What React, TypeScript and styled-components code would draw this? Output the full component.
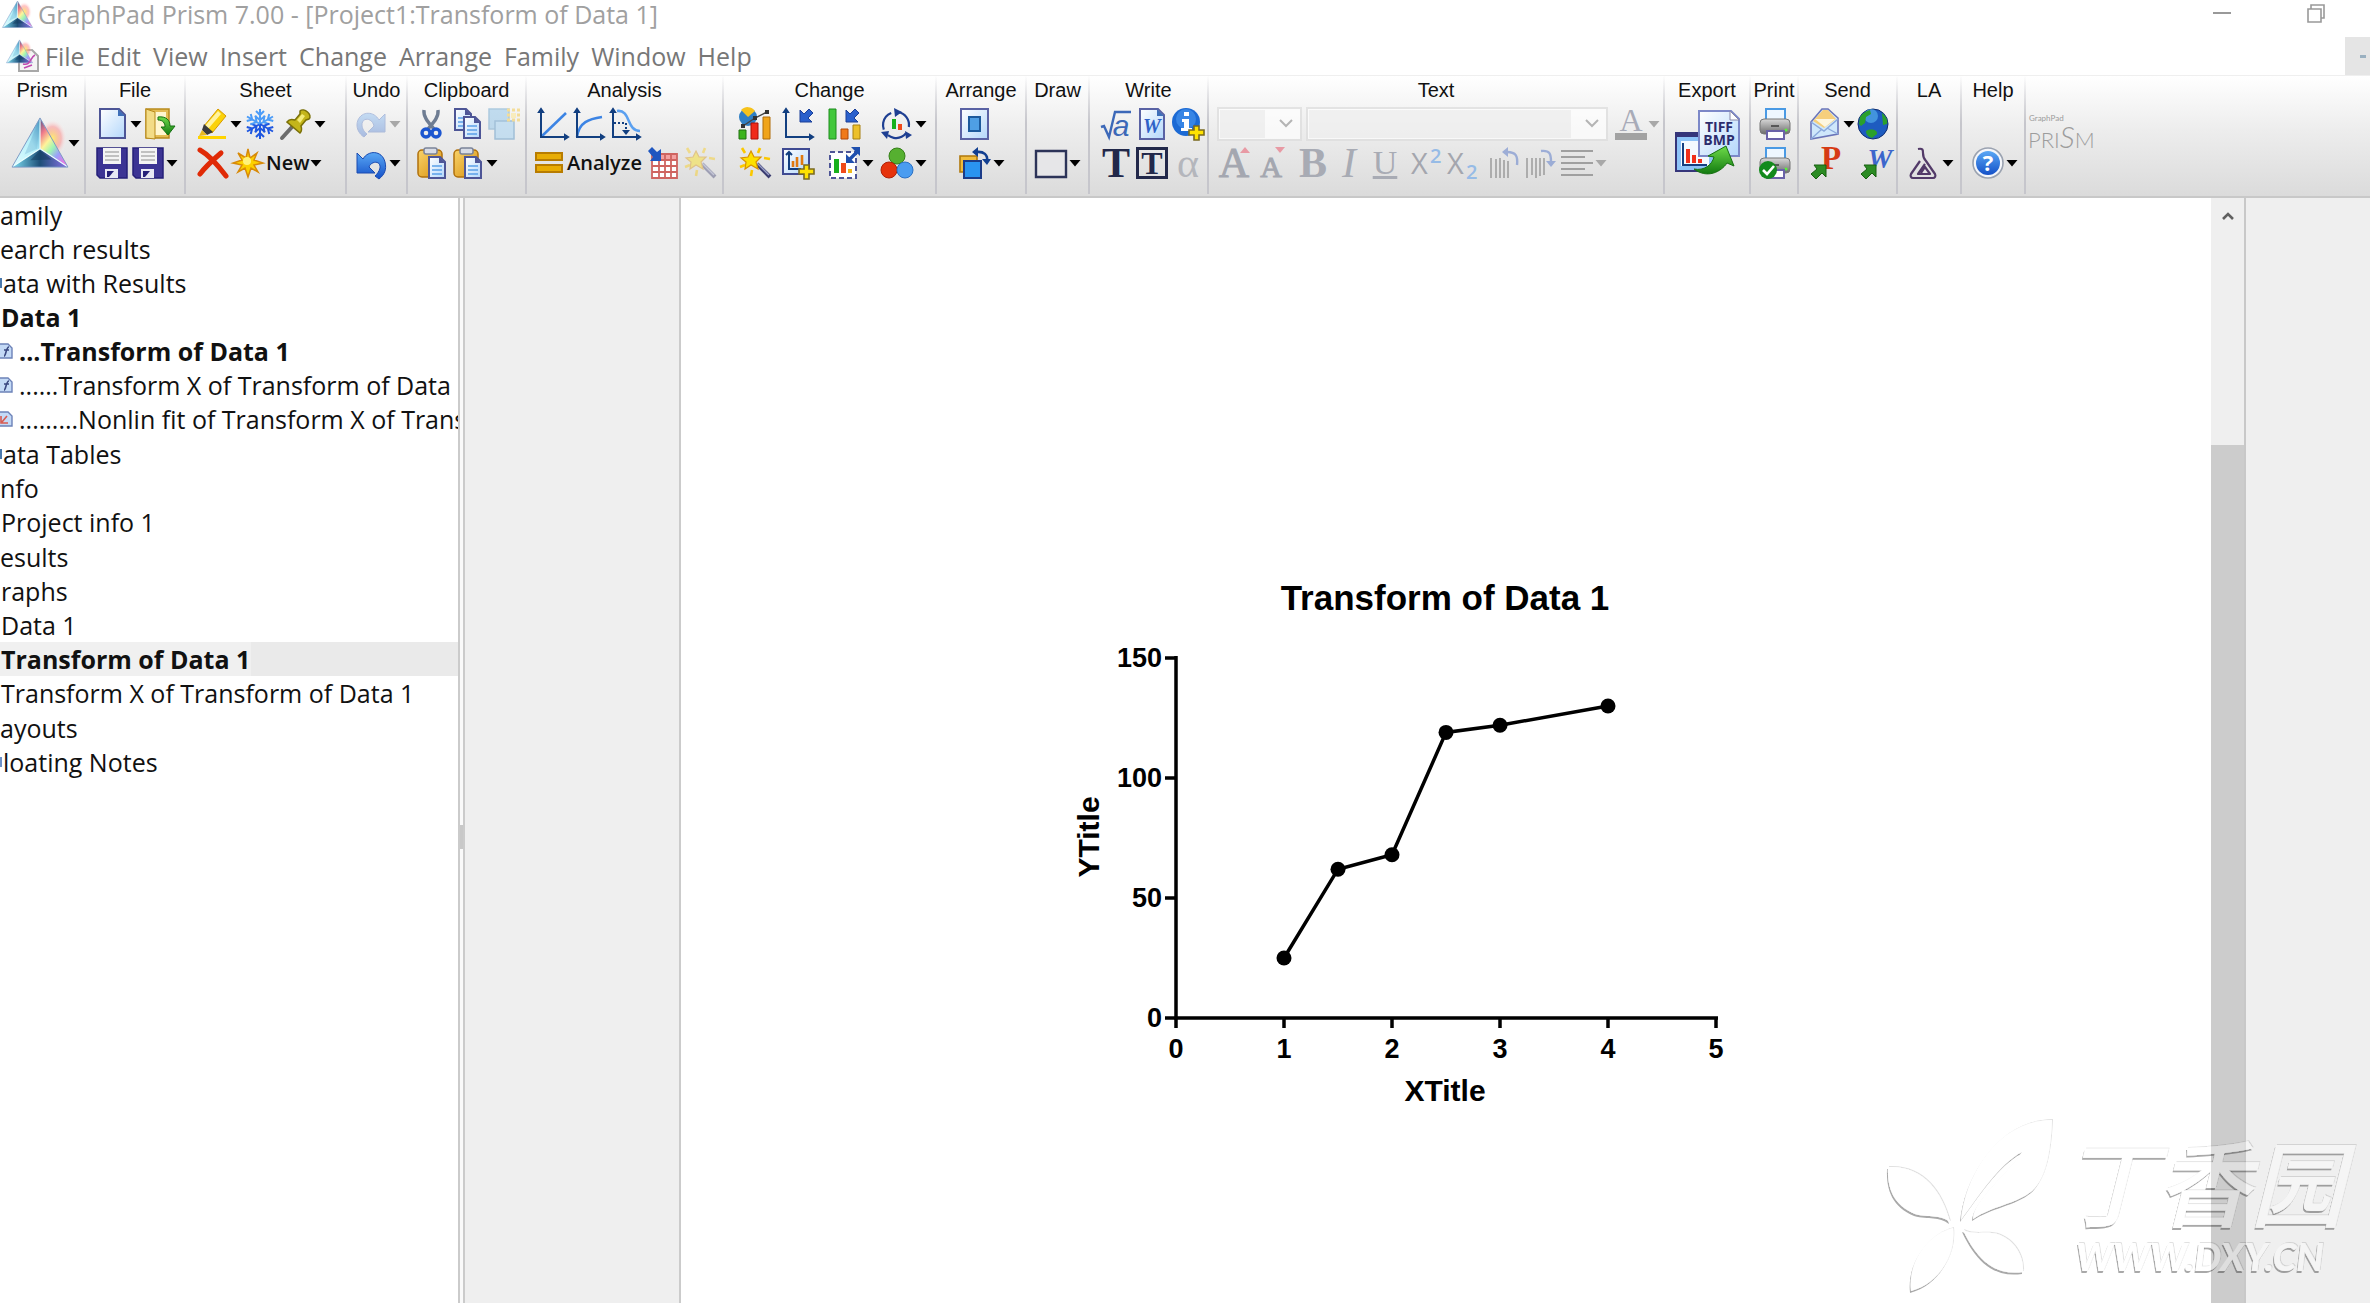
import React from "react";
import styled, { createGlobalStyle } from "styled-components";

const ui = `"Open Sans", "Noto Sans", sans-serif`;
const arial = `"Liberation Sans", Arial, sans-serif`;
const serif = `"Liberation Serif", "Times New Roman", serif`;

const Global = createGlobalStyle`
  * { box-sizing: border-box; }
  html, body, #root { height: 100%; }
  body { margin: 0; background: #fff; font-family: ${ui}; overflow: hidden; }
  button { font: inherit; color: inherit; }
`;

/* ---------- shell ---------- */

const Shell = styled.div`
  display: flex;
  flex-direction: column;
  height: 100%;
`;

const TitleBar = styled.header`
  display: flex;
  align-items: center;
  height: 37px;
  padding-bottom: 9px;
  color: #a0a0a0;
`;

const TitleText = styled.h1`
  flex: 1;
  margin: 0 0 0 3px;
  font-size: 25px;
  line-height: 28px;
  font-weight: 400;
  white-space: nowrap;
`;

const WindowButton = styled.button`
  display: flex;
  align-items: center;
  justify-content: center;
  width: 94px;
  height: 24px;
  padding: 0;
  border: 0;
  background: none;
`;

const WindowButtons = styled.div`
  display: flex;
  padding-right: 7px;
`;

const MenuBar = styled.nav`
  display: flex;
  align-items: center;
  height: 38px;
  padding-left: 6px;
`;

const MenuList = styled.div`
  display: flex;
  flex: 1;
  gap: 12px;
  padding-left: 5px;
`;

const MenuButton = styled.button`
  padding: 0;
  border: 0;
  background: none;
  color: #777;
  font-size: 25px;
  line-height: 36px;
`;

const ChildMinimize = styled.button`
  display: flex;
  align-items: center;
  justify-content: flex-end;
  width: 25px;
  height: 38px;
  padding: 0 4px;
  border: 0;
  background: #e5e5e5;
`;

/* ---------- ribbon ---------- */

const Ribbon = styled.div`
  display: flex;
  height: 123px;
  border-top: 1px solid #efefef;
  border-bottom: 2px solid #c8c8c8;
  background: linear-gradient(#fff, #ededed 45%, #dbdbdb);
`;

const GroupBox = styled.section<{ $w: number }>`
  display: flex;
  flex-direction: column;
  flex: none;
  width: ${(p) => p.$w}px;
  height: 118px;
  border-right: 2px solid;
  border-image: linear-gradient(rgba(200, 200, 208, 0), #c6c6cc 40%) 1;
`;

const GroupTitle = styled.h2`
  margin: 0;
  color: #111;
  font: 400 20px/28px ${arial};
  text-align: center;
  white-space: nowrap;
`;

const Row = styled.div<{ $pad?: number; $gap?: number; $tall?: boolean }>`
  display: flex;
  align-items: center;
  height: ${(p) => (p.$tall ? 78 : 39)}px;
  padding-left: ${(p) => p.$pad ?? 8}px;
  gap: ${(p) => p.$gap ?? 0}px;
`;

const Columns = styled.div<{ $pad: number; $cols: string }>`
  display: grid;
  grid-template-columns: ${(p) => p.$cols};
  grid-auto-rows: 39px;
  align-items: center;
  padding-left: ${(p) => p.$pad}px;
`;

const Cell = styled.div`
  display: flex;
  align-items: center;
`;

const Tool = styled.button<{ $w?: number }>`
  display: flex;
  align-items: center;
  justify-content: center;
  flex: none;
  width: ${(p) => p.$w ?? 36}px;
  height: 36px;
  padding: 0;
  border: 0;
  background: none;
`;

const BigTool = styled(Tool)`
  height: 76px;
`;

const WordTool = styled.button`
  padding: 0;
  border: 0;
  background: none;
  color: #111;
  font: 600 20px/36px ${ui};
`;

const Glyph = styled.span<{ $size: number; $bold?: boolean; $italic?: boolean; $underline?: boolean; $boxed?: boolean; $color: string }>`
  display: flex;
  align-items: center;
  justify-content: center;
  ${(p) => (p.$boxed ? "width: 32px; height: 32px; border: 3px solid #22284a;" : "")}
  color: ${(p) => p.$color};
  font-family: ${serif};
  font-size: ${(p) => p.$size}px;
  line-height: 32px;
  font-weight: ${(p) => (p.$bold ? 700 : 400)};
  font-style: ${(p) => (p.$italic ? "italic" : "normal")};
  text-decoration: ${(p) => (p.$underline ? "underline" : "none")};
`;

const SelectWrap = styled.label<{ $w: number }>`
  position: relative;
  display: block;
  width: ${(p) => p.$w}px;
  height: 34px;
  svg { position: absolute; right: 9px; top: 12px; }
`;

const SelectBox = styled.select`
  appearance: none;
  width: 100%;
  height: 100%;
  border: 2px solid #dcdcdc;
  background: linear-gradient(#f0f0f0, #f0f0f0) 1px 1px / calc(100% - 36px) calc(100% - 2px) no-repeat, #fff;
`;

const Brand = styled.div`
  padding: 38px 0 0 2px;
`;

/* ---------- body ---------- */

const Body = styled.main`
  display: flex;
  flex: 1;
  min-height: 0;
`;

const Sidebar = styled.aside`
  flex: none;
  width: 458px;
  overflow: hidden;
`;

const Tree = styled.div`
  display: flex;
  flex-direction: column;
  gap: 1px;
`;

const Branch = styled.ul`
  margin: 0;
  padding: 0;
  list-style: none;
`;

const Item = styled.li<{ $pad: number; $bold?: boolean; $selected?: boolean; $edge?: string }>`
  display: flex;
  align-items: center;
  gap: 6px;
  height: 34px;
  padding-left: ${(p) => p.$pad}px;
  background: ${(p) =>
    p.$selected
      ? "linear-gradient(90deg, #f0f0f0 251px, #eaeaea 251px)"
      : p.$edge
        ? `linear-gradient(${p.$edge}, ${p.$edge}) 0 50% / 2px 10px no-repeat`
        : "none"};
  color: #111;
  font-size: 25px;
  line-height: 32px;
  font-weight: ${(p) => (p.$bold ? 700 : 400)};
  white-space: nowrap;
  svg { flex: none; }
`;

const Splitter = styled.div`
  display: flex;
  align-items: center;
  flex: none;
  width: 7px;
  padding-top: 173px;
  border: solid #cbcbcb;
  border-width: 0 2px;
  background: #fafafa;
`;

const Grip = styled.div`
  width: 3px;
  height: 24px;
  background: #c8c8c8;
`;

const Gutter = styled.div<{ $w: number; $line?: boolean }>`
  flex: none;
  width: ${(p) => p.$w}px;
  border-right: ${(p) => (p.$line ? "2px solid #cbcbcb" : "0")};
  background: #efefef;
`;

const Page = styled.div`
  display: flex;
  flex: 1;
  flex-direction: column;
  align-items: center;
  padding-top: 372px;
  background: #fff;
`;

const ScrollTrack = styled.div`
  display: flex;
  flex-direction: column;
  flex: none;
  width: 35px;
  border-right: 2px solid #c8c8c8;
  background: #efefef;
`;

const ScrollUp = styled.button`
  height: 36px;
  padding: 0 0 4px;
  border: 0;
  background: none;
`;

const Thumb = styled.div`
  flex: 1;
  margin-top: 211px;
  background: #ccc;
`;

const Watermark = styled.div`
  position: absolute;
  right: 0;
  bottom: 0;
  pointer-events: none;
  svg { display: block; }
`;

/* ---------- icons ---------- */

const Drawing = styled.svg`
  flex: none;
  overflow: visible;
`;

const HiddenDefs = styled.svg`
  position: absolute;
`;

const Svg = ({ children, w = 32, h = 32, vb = "0 0 32 32", o = 1 }: any) => (
  <Drawing width={w} height={h} viewBox={vb} opacity={o} fill="none" aria-hidden="true">{children}</Drawing>
);

const Caret = ({ dim = false }) => (
  <Tool $w={12} aria-label="More">
    <svg width="12" height="8" viewBox="0 0 12 8"><path d="M0.5 1h11L6 7.5z" fill={dim ? "#a8a8a8" : "#000"} /></svg>
  </Tool>
);

const Defs = () => (
  <HiddenDefs width="0" height="0" aria-hidden="true">
    <defs>
      <linearGradient id="doc" x1="0" y1="0" x2="1" y2="1"><stop offset="0" stopColor="#fff" /><stop offset="1" stopColor="#b3d7fb" /></linearGradient>
      <linearGradient id="gold" x1="0" y1="0" x2="1" y2="1"><stop offset="0" stopColor="#f9d36a" /><stop offset="1" stopColor="#d7900f" /></linearGradient>
      <linearGradient id="blue" x1="0" y1="0" x2="0" y2="1"><stop offset="0" stopColor="#5aa8f5" /><stop offset="1" stopColor="#1450c8" /></linearGradient>
      <linearGradient id="green" x1="0" y1="0" x2="0" y2="1"><stop offset="0" stopColor="#6fdc4a" /><stop offset="1" stopColor="#127a10" /></linearGradient>
      <linearGradient id="left" x1="0" y1="1" x2="1" y2="0"><stop offset="0" stopColor="#e4fdff" /><stop offset=".6" stopColor="#b4f0fa" /><stop offset="1" stopColor="#3c92c0" /></linearGradient>
      <linearGradient id="base" x1="0" y1="0" x2="1" y2="0"><stop offset="0" stopColor="#7fe0f4" /><stop offset=".5" stopColor="#1d4f78" /><stop offset="1" stopColor="#8b72e8" /></linearGradient>
      <linearGradient id="rain" x1="0" y1="0" x2=".7" y2="1"><stop offset="0" stopColor="#4b4f88" /><stop offset=".25" stopColor="#f07a8a" /><stop offset=".45" stopColor="#fff49a" /><stop offset=".62" stopColor="#9df6b4" /><stop offset=".8" stopColor="#9aa0fa" /><stop offset="1" stopColor="#e47ae4" /></linearGradient>
      <radialGradient id="glow"><stop offset="0" stopColor="#ffef60" stopOpacity=".9" /><stop offset=".6" stopColor="#ff8a8a" stopOpacity=".5" /><stop offset="1" stopColor="#fff" stopOpacity="0" /></radialGradient>
      <linearGradient id="printer" x1="0" y1="0" x2="0" y2="1"><stop offset="0" stopColor="#d8d8d8" /><stop offset="1" stopColor="#6c6c6c" /></linearGradient>
      <filter id="bevel" x="-5%" y="-10%" width="110%" height="120%">
        <feOffset in="SourceAlpha" dx="-1.5" dy="1.5" result="a" />
        <feGaussianBlur in="a" stdDeviation=".5" result="ab" />
        <feComposite in="ab" in2="SourceAlpha" operator="out" result="dark" />
        <feOffset in="SourceAlpha" dx="1" dy="-1" result="b" />
        <feComposite in="b" in2="SourceAlpha" operator="out" result="soft" />
        <feComponentTransfer in="dark" result="d2"><feFuncA type="linear" slope=".34" /></feComponentTransfer>
        <feComponentTransfer in="soft" result="s2"><feFuncA type="linear" slope=".12" /></feComponentTransfer>
        <feComponentTransfer in="SourceGraphic" result="body"><feFuncA type="linear" slope=".35" /></feComponentTransfer>
        <feMerge><feMergeNode in="s2" /><feMergeNode in="d2" /><feMergeNode in="body" /></feMerge>
      </filter>
    </defs>
  </HiddenDefs>
);

const PrismArt = () => (
  <>
    <ellipse cx="43" cy="23" rx="15" ry="20" fill="url(#glow)" />
    <path d="M30 2 1 53 30 34z" fill="url(#left)" />
    <path d="M30 2 59 53 30 34z" fill="url(#rain)" />
    <path d="M1 53 30 34 59 53z" fill="url(#base)" />
    <path d="M30 2v32M1 53l29-19 29 19" stroke="#eaffff" strokeWidth="1.2" />
    <path d="M30 2 27 34 14 40z" fill="#5f9fc8" opacity=".3" />
    <path d="M30 36 20 46 42 45z" fill="#123a5c" opacity=".5" />
    <path d="M30 2 1 53h58z" stroke="#7b98c4" strokeWidth="1" />
  </>
);
const PrismIcon = ({ w = 60, h = 56 }) => <Svg w={w} h={h} vb="0 0 60 56"><PrismArt /></Svg>;

const PrismDocIcon = () => (
  <Svg w={34} h={34} vb="0 0 34 34">
    <path d="M13 11h13l6 6v15H13z" fill="#f4f4f4" stroke="#a8a8a8" strokeWidth="2" />
    <g transform="scale(.45)"><PrismArt /></g>
    <path d="M17 25c8 2 7-7 12-9M18 29l8-3" stroke="#c04ab0" strokeWidth="1.6" />
  </Svg>
);

const NewDocIcon = () => <Svg><path d="M4 1h19l6 6v23H4z" fill="url(#doc)" stroke="#4d5596" strokeWidth="2" /><path d="M22 1v7h7z" fill="#3f6fb8" /></Svg>;
const OpenIcon = () => (
  <Svg>
    <path d="M2 1h23v29H2z" fill="#e4bc54" stroke="#b88a1c" strokeWidth="1.5" /><path d="M8 4h14v23H8z" fill="#fff6cf" />
    <path d="M2 1l9 3v27l-9-1z" fill="#f3dc86" stroke="#b88a1c" />
    <path d="M14 9c8-1 12 3 12 9h5l-7 9-7-8h4c0-4-2-7-7-7z" fill="url(#green)" stroke="#157012" />
  </Svg>
);
const SaveIcon = () => (
  <Svg>
    <path d="M1 1h30v30H4l-3-3z" fill="#3c3494" stroke="#251f78" strokeWidth="1.5" />
    <path d="M7 1h18v16H7z" fill="#f4f4f4" /><path d="M9 5h14M9 9h14M9 13h14" stroke="#b0b0b0" strokeWidth="1.6" />
    <path d="M9 22h13v9H9z" fill="#e8e8f4" /><path d="M11 24h7l-5 6h-2z" fill="#251f78" />
  </Svg>
);
const HighlighterIcon = () => (
  <Svg>
    <path d="M2 28h28v3H2z" fill="#ffd400" />
    <path d="M22 1l8 7-14 17-8-7z" fill="#fbd20a" stroke="#d79a00" /><path d="M22 3l3 3-13 15-3-3z" fill="#fff3a0" />
    <path d="M8 16l9 8-6 3-5-5z" fill="#3a3a3a" /><path d="M6 22l5 5-8 1z" fill="#e8b820" />
  </Svg>
);
const SnowIcon = () => (
  <Svg>
    {[0, 60, 120, 180, 240, 300].map((a) => (
      <path key={a} transform={`rotate(${a} 16 16)`} d="M16 16V1M12 3l4 4 4-4M11 8l5 4 5-4" stroke={a > 90 && a < 270 ? "#1f57e0" : "#4b9cf8"} strokeWidth="2" />
    ))}
  </Svg>
);
const PinIcon = () => (
  <Svg>
    <path d="M12 19L2 30" stroke="#6c6c6c" strokeWidth="4" strokeLinecap="round" />
    <path d="M20 3c4-4 13 4 9 8l-3 1-5 6c1 3 1 5-1 7L7 14c2-3 5-3 8-2l5-6z" fill="#c4b51a" stroke="#7a7008" strokeWidth="1.5" />
    <path d="M17 12l5-6 3 2-5 7z" fill="#f4ec7a" />
  </Svg>
);
const DeleteIcon = () => <Svg><path d="M4 3c9 5 17 14 26 26M25 6C18 12 10 19 4 27" stroke="#e02a06" strokeWidth="5" strokeLinecap="round" /></Svg>;
const StarIcon = () => (
  <Svg><path d="M16 2l2 9 7-5-3 7 9 3-9 2 4 7-7-4-3 9-3-9-7 4 4-7-9-2 9-3-4-7 8 5z" fill="#fcd000" stroke="#d88a08" strokeWidth="1.5" /><circle cx="15" cy="14" r="4" fill="#fff27a" /></Svg>
);
const UndoIcon = () => <Svg><path d="M2 6v20h18l-6-6c2-6 12-7 11 1-1 4-3 6-5 8l4 3c5-4 8-9 6-17C27 3 13 3 8 12z" fill="url(#blue)" stroke="#1a4ab0" /></Svg>;
const RedoIcon = () => <Svg o={0.3}><path d="M30 6v18H13l6-6C17 9 6 9 7 18c1 5 3 6 5 8l-3 3C4 26 0 19 3 12 7 3 19 3 24 12z" fill="url(#blue)" stroke="#1a4ab0" /></Svg>;
const CutIcon = () => (
  <Svg>
    <path d="M8 2c-1 7 5 13 10 19M22 2c1 7-5 13-10 19" stroke="#6e7c92" strokeWidth="3.4" />
    <circle cx="10" cy="25" r="4" stroke="#1c56d0" strokeWidth="3.4" /><circle cx="20" cy="25" r="4" stroke="#1c56d0" strokeWidth="3.4" />
  </Svg>
);
const Sheet = ({ x = 0, y = 0 }) => (
  <g transform={`translate(${x} ${y})`}>
    <path d="M1 1h11l5 5v16H1z" fill="url(#doc)" stroke="#4d5596" strokeWidth="2" />
    <path d="M4 10h10M4 14h10M4 18h10" stroke="#5aa0e8" strokeWidth="1.6" /><path d="M11 1v6h6z" fill="#4d5596" />
  </g>
);
const CopyIcon = () => <Svg><Sheet x={2} y={0} /><Sheet x={11} y={8} /></Svg>;
const DuplicateIcon = () => (
  <Svg o={0.5}>
    <path d="M1 1h20v20H1z" fill="#8ec4ea" stroke="#6aa2cc" strokeWidth="1.5" /><path d="M7 13h19v18H7z" fill="#9fd0f2" stroke="#5a94c4" strokeWidth="1.5" />
    <path d="M19 2h13M19 7h13M19 12h13" stroke="#f4c840" strokeWidth="3" strokeDasharray="3 2" /><path d="M23 5h5v5h-5z" fill="#ffe88a" />
  </Svg>
);
const PasteIcon = () => (
  <Svg>
    <rect x="2" y="3" width="24" height="27" rx="4" fill="url(#gold)" stroke="#b0700c" strokeWidth="1.5" />
    <rect x="8" y="1" width="13" height="6" rx="2" fill="#d8dce6" stroke="#7a8298" strokeWidth="1.5" />
    <Sheet x={12} y={9} />
  </Svg>
);
const Axes = () => <path d="M4 4v25h26M2 4l2-3 2 3zM28 27l3 2-3 2z" stroke="#123f80" strokeWidth="2" fill="none" />;
const LinearIcon = () => <Svg><path d="M4 29L29 5" stroke="#3c84e4" strokeWidth="2.5" /><Axes /></Svg>;
const CurveIcon = () => <Svg><path d="M4 29C6 14 16 11 29 9" stroke="#3c84e4" strokeWidth="2.5" /><Axes /></Svg>;
const DoseIcon = () => (
  <Svg><path d="M8 3c14-2 9 20 23 20" stroke="#5aa0f0" strokeWidth="2.5" /><path d="M5 15h12v9" stroke="#123f80" strokeWidth="2" strokeDasharray="2 2" /><path d="M13 22h8l-4 5z" fill="#123f80" /><Axes /></Svg>
);
const EqualsIcon = () => <Svg w={28} h={32} vb="0 0 28 32"><path d="M1 6h26v7H1zM1 18h26v7H1z" fill="#e8ac04" stroke="#b87c00" strokeWidth="2" /></Svg>;
const TableIcon = () => (
  <Svg>
    <path d="M5 7h25v24H5z" fill="#fff" /><path d="M14 7h16v5H14z" fill="#f4a0a0" />
    <path d="M5 7h25v24H5zM5 13h25M5 19h25M5 25h25M12 7v24M18 7v24M24 7v24" stroke="#cf6460" strokeWidth="1.8" />
    <path d="M1 4l4-4 5 5 4-3v12H3l3-4z" fill="#1f56c0" />
  </Svg>
);
const WandIcon = ({ o = 1 }) => (
  <Svg o={o}>
    <path d="M18 17l13 13" stroke="#3a3c70" strokeWidth="4" /><path d="M18 16l12 12" stroke="#9aa0c8" strokeWidth="1.4" />
    <path d="M3 1l3 5M21 1l-2 5M1 20l5-2M12 29l1-6M25 11l6 1" stroke="#fbc800" strokeWidth="2.6" />
    <path d="M12 4l3 6 7 0-5 5 2 7-7-4-6 4 1-7-5-4 7-1z" fill="#fde000" stroke="#d89000" strokeWidth="1.2" />
  </Svg>
);
const ChartMixIcon = () => (
  <Svg w={34}>
    <circle cx="9" cy="9" r="9" fill="#2f7fc4" /><path d="M9 9L2 2a9 9 0 0 1 14 1z" fill="#f6c21a" />
    <path d="M0 22h7v9H0z" fill="#3cb41c" stroke="#207010" /><path d="M12 15h7v16h-7z" fill="#f02a1a" stroke="#a81008" /><path d="M24 9h7v22h-7z" fill="#f0a41a" stroke="#b06c08" />
    <path d="M4 18l12-8 12-6" stroke="#444" strokeWidth="1.4" /><path d="M2 16h4v4H2zM14 8h4v4h-4zM26 2h4v4h-4z" fill="#333" />
  </Svg>
);
const DownLeft = () => <path d="M18 2v12h12l-4-4 5-5-4-4-5 5z" fill="#2a60cc" stroke="#1a3f98" />;
const AxisSwapIcon = () => <Svg><Axes /><DownLeft /></Svg>;
const BarSwapIcon = () => (
  <Svg w={34}>
    <path d="M1 1h7v30H1z" fill="#42c83c" stroke="#1c8c1c" /><path d="M13 21h7v10h-7z" fill="#f07a1a" stroke="#b04808" /><path d="M25 17h7v14h-7z" fill="#ecc02a" stroke="#a88010" />
    <DownLeft />
  </Svg>
);
const RotateChartIcon = () => (
  <Svg>
    <circle cx="15" cy="17" r="13" stroke="#1e3f92" strokeWidth="2.2" strokeDasharray="20 7" transform="rotate(-80 15 17)" />
    <path d="M13 0l8 4-7 5zM0 24l8-1-2 8zM25 31l-1-8 7 4z" fill="#1e3f92" /><path d="M11 11h4v10h-4z" fill="#18b01c" /><path d="M17 16h4v6h-4z" fill="#f04a1a" />
  </Svg>
);
const Plus = () => <path d="M22 18h5v4h5v5h-5v5h-5v-5h-5v-5h5z" fill="#ffe200" stroke="#7a6a20" strokeWidth="1.6" />;
const AddGraphIcon = () => (
  <Svg><path d="M1 2h26v25H1z" fill="url(#doc)" stroke="#3f4a92" strokeWidth="2" /><path d="M7 5v17h12M4 8l3-3 3 3" stroke="#123f80" strokeWidth="2" /><path d="M11 14v6M15 10v10M20 8v10" stroke="#e07a10" strokeWidth="2.6" /><Plus /></Svg>
);
const ResizeIcon = () => (
  <Svg w={34}>
    <path d="M2 5h26v26H2z" fill="#fff" stroke="#4d5596" strokeWidth="2" strokeDasharray="5 3" />
    <path d="M6 12h5v14H6z" fill="#18b01c" /><path d="M13 16h5v10h-5z" fill="#f04a1a" /><path d="M20 22h4v4h-4z" fill="#f0b81a" />
    <path d="M21 13L29 5" stroke="#1f4fae" strokeWidth="3.4" /><path d="M23 0h9v9zM18 7v9h9z" fill="#1f4fae" />
  </Svg>
);
const BallsIcon = () => <Svg><circle cx="16" cy="9" r="8" fill="#56b030" stroke="#358018" /><circle cx="8" cy="23" r="8" fill="#e6330c" stroke="#b02006" /><circle cx="24" cy="23" r="8" fill="#4a9cf0" stroke="#2a70c4" /></Svg>;
const CenterIcon = () => <Svg><path d="M2 1h27v30H2z" fill="url(#doc)" stroke="#5a62a4" strokeWidth="2" /><path d="M10 9h11v14H10z" fill="#4f9fe4" stroke="#1c5a9c" strokeWidth="2" /></Svg>;
const OrderIcon = () => (
  <Svg><path d="M1 9h17v16H1z" fill="#f0bc3c" stroke="#b0780c" strokeWidth="1.6" /><path d="M5 14h17v17H5z" fill="#2a94f0" stroke="#1c3c88" strokeWidth="2" /><path d="M17 5c8-1 12 3 11 9" stroke="#123f90" strokeWidth="2.6" /><path d="M19 0v10l-6-5zM23 12h9l-4 6z" fill="#123f90" /></Svg>
);
const RectIcon = () => <Svg w={34}><path d="M1 4h30v26H1z" fill="#e6e6e8" stroke="#2c3358" strokeWidth="2.4" /></Svg>;
const WordDocIcon = () => (
  <Svg><path d="M4 1h18l6 6v24H4z" fill="url(#doc)" stroke="#5a62a4" strokeWidth="2" /><path d="M21 1v7h7z" fill="#3f6fb8" /><text x="16" y="25" textAnchor="middle" fontFamily={serif} fontSize="20" fontWeight="700" fontStyle="italic" fill="#2f62c8">W</text></Svg>
);
const RootIcon = () => (
  <Svg><path d="M1 19l3-1 5 11L15 4h16" stroke="#3c68b8" strokeWidth="2.4" /><text x="21" y="28" textAnchor="middle" fontFamily={arial} fontSize="30" fontStyle="italic" fill="#3c68b8">a</text></Svg>
);
const InfoIcon = () => <Svg><circle cx="14" cy="14" r="14" fill="#1c6ad4" /><circle cx="14" cy="11" r="10" fill="#4a98f0" opacity=".6" /><path d="M12 4h5v4h-5zM10 11h7v9h3v3H9v-3h3v-6h-2z" fill="#fff" /><Plus /></Svg>;
const RotTextIcon = ({ cw = false }) => (
  <Svg o={0.6}>
    {cw
      ? <path d="M2 11v20M7 11v17M11 11v20M15 11v18M19 11v17" stroke="#8a8a8a" strokeWidth="2" />
      : <path d="M2 11v20M7 12v19M11 11v20M15 13v18M19 14v17" stroke="#8a8a8a" strokeWidth="2" />}
    {cw ? <path d="M16 4c9-1 10 3 10 11" stroke="#6c88cc" strokeWidth="2.4" /> : <path d="M28 18c1-9-1-13-10-13" stroke="#6c88cc" strokeWidth="2.4" />}
    {cw ? <path d="M21 14h10l-5 6z" fill="#6c88cc" /> : <path d="M19 0v10l-6-5z" fill="#6c88cc" />}
  </Svg>
);
const AlignIcon = () => <Svg><path d="M0 4h32M0 10h24M0 16h32M0 22h24M0 28h32" stroke="#a0a0a0" strokeWidth="2.2" /></Svg>;
const FontColorIcon = () => <Svg w={34}><text x="17" y="23" textAnchor="middle" fontFamily={serif} fontSize="32" fill="#a8abb8">A</text><path d="M1 25h32v7H1z" fill="#a2a2a2" /></Svg>;
const SizeIcon = ({ up = true }) => (
  <Svg w={34}>
    <text x={up ? 15 : 16} y="30" textAnchor="middle" fontFamily={serif} fontSize={up ? 42 : 30} fontWeight={400} fill="#a4a7b0" stroke="#a4a7b0" strokeWidth="1">A</text>
    <path d={up ? "M21 6h10l-5-6z" : "M20 0h10l-5 6z"} fill="#e89aa4" />
  </Svg>
);
const ScriptIcon = ({ sup = true }) => (
  <Svg w={34} vb="0 0 34 32">
    <text x="1" y="27" fontFamily={ui} fontSize="29" fill="#a4a6ae">X</text>
    <text x="20" y={sup ? 16 : 32} fontFamily={ui} fontSize="20" fontWeight="600" fill="#96bbe6">2</text>
  </Svg>
);
const ExportIcon = () => (
  <Svg w={66} h={68} vb="0 0 66 68">
    <path d="M1 24h40v38H1z" fill="#8ec4f8" stroke="#35357a" strokeWidth="2" /><path d="M1 24h40v4H1z" fill="#35357a" /><path d="M6 32h28v25H6z" fill="#f4faff" />
    <path d="M8 34v22h24" stroke="#153f80" strokeWidth="2" /><path d="M13 40v14M19 46v8M25 50v4" stroke="#f0301a" strokeWidth="4" />
    <path d="M24 2h32l8 8v37H24z" fill="url(#doc)" stroke="#7c88c8" strokeWidth="2" /><path d="M55 2v9h9z" fill="#fff" stroke="#8888a8" />
    <g fontFamily={ui} fontSize="14" fontWeight="700" fill="#2c2c6c" textAnchor="middle"><text x="44" y="23">TIFF</text><text x="44" y="36">BMP</text></g>
    <path d="M19 60c10 2 18-4 20-12l-6-1 18-10 8 20-7-3c-6 9-20 16-33 6z" fill="url(#green)" stroke="#177012" />
  </Svg>
);
const PrinterArt = () => (
  <>
    <path d="M7 1h19v12H7z" fill="#eef7ff" stroke="#4a9ae4" strokeWidth="2" /><rect x="1" y="11" width="30" height="15" rx="4" fill="url(#printer)" stroke="#777" />
    <path d="M12 18h8" stroke="#444" strokeWidth="1.6" /><circle cx="27" cy="22" r="1.6" fill="#5af03c" /><path d="M8 23h17v8H8z" fill="#fff" stroke="#6a62a8" strokeWidth="2" />
  </>
);
const PrintIcon = () => <Svg><PrinterArt /></Svg>;
const PrintOkIcon = () => <Svg><PrinterArt /><circle cx="9" cy="23" r="9" fill="#128a1c" /><path d="M4 23l4 4 7-8" stroke="#fff" strokeWidth="2.6" /></Svg>;
const MailIcon = () => (
  <Svg><path d="M2 14L13 1h6l10 9v16L2 31z" fill="#cfe7fb" stroke="#6a74b8" strokeWidth="1.6" /><path d="M4 13L14 2h5l8 9-12 9z" fill="#f6cf7c" /><path d="M6 11h20l-10 8z" fill="#fdf6e0" /><path d="M2 14l13 9 14-12M2 31l11-10M29 26l-11-6" stroke="#8aa8dc" strokeWidth="1.4" /></Svg>
);
const GlobeIcon = () => (
  <Svg><circle cx="16" cy="16" r="15" fill="#1e5cc0" stroke="#0e2c70" /><circle cx="14" cy="8" r="7" fill="#5ab8f0" opacity=".6" /><path d="M3 9c3-4 6-6 10-7l1 4-5 3-1 6-4 3-2-2zM9 23c5-3 12-1 11 3l-5 4c-3-1-6-3-6-7zM25 5c4 3 6 7 5 11l-4 1z" fill="#2aa02c" /></Svg>
);
const SendArrow = () => <path d="M5 18h12v12l-4-4-6 6-5-5 6-5z" fill="#2c8c24" stroke="#17600f" />;
const PowerPointIcon = () => <Svg w={34}><text x="22" y="22" textAnchor="middle" fontFamily={serif} fontSize="33" fontWeight="700" fill="#d63a14">P</text><SendArrow /></Svg>;
const WordIcon = () => <Svg w={34}><text x="21" y="21" textAnchor="middle" fontFamily={serif} fontSize="28" fontWeight="700" fontStyle="italic" fill="#3c66cc">W</text><SendArrow /></Svg>;
const FlaskIcon = () => <Svg><path d="M10 2c5-1 5 1 5 4s0 5 3 8l9 13c1 2 0 4-2 4H5c-2 0-3-2-2-4l9-13M17 17l-7 10h12l-5-7-4 6" stroke="#523a68" strokeWidth="2.2" strokeLinejoin="round" /></Svg>;
const HelpIcon = () => (
  <Svg><circle cx="16" cy="16" r="15" fill="#f4f6fa" stroke="#9aa2b0" strokeWidth="1.6" /><circle cx="16" cy="16" r="12" fill="url(#blue)" /><text x="16" y="24" textAnchor="middle" fontFamily={ui} fontSize="22" fontWeight="700" fill="#fff">?</text></Svg>
);
const SheetGlyph = ({ red = false }) => (
  <svg width="13" height="16" viewBox="0 0 13 16" fill="none"><path d="M-2 1h10l4 4v10H-2z" fill="#c4daf6" stroke="#6c82b8" strokeWidth="1.4" /><path d={red ? "M1 5v7h7M2 11l5-6" : "M4 13c2 0 2-9 5-9M4 7h5"} stroke={red ? "#d85a50" : "#3a4880"} strokeWidth="1.6" /></svg>
);

/* ---------- ribbon parts ---------- */

const Group = ({ title, w, children }: { title: string; w: number; children: React.ReactNode }) => (
  <GroupBox $w={w} aria-label={title}>
    <GroupTitle>{title}</GroupTitle>
    {children}
  </GroupBox>
);

const T = ({ label, w, children }: { label: string; w?: number; children: React.ReactNode }) => (
  <Tool $w={w} aria-label={label}>{children}</Tool>
);

const Choice = ({ label, w }: { label: string; w: number }) => (
  <SelectWrap $w={w}>
    <SelectBox disabled aria-label={label} />
    <svg width="14" height="9" viewBox="0 0 14 9" fill="none"><path d="M1 1l6 6 6-6" stroke="#b4b4b4" strokeWidth="2" /></svg>
  </SelectWrap>
);

/* ---------- chart ---------- */

const X0 = 110;
const Y0 = 448;
const PLOT_W = 540;
const PLOT_H = 360;
const points: [number, number][] = [[1, 25], [1.5, 62], [2, 68], [2.5, 119], [3, 122], [4, 130]];
const px = (v: number) => X0 + (v / 5) * PLOT_W;
const py = (v: number) => Y0 - (v / 150) * PLOT_H;

const Chart = () => (
  <svg width="760" height="560" viewBox="0 0 760 560" fontFamily={arial} fontWeight="700" role="img" aria-label="Transform of Data 1">
    <text x="379" y="40" fontSize="35" textAnchor="middle">Transform of Data 1</text>
    <path d={`M${X0} ${py(150) - 2}V${Y0}H${px(5) + 2}`} fill="none" stroke="#000" strokeWidth="3.5" />
    {[0, 50, 100, 150].map((v) => (
      <g key={v}>
        <path d={`M${X0 - 11} ${py(v)}h12`} stroke="#000" strokeWidth="3.5" />
        <text x={X0 - 14} y={py(v) + 9} fontSize="27" textAnchor="end">{v}</text>
      </g>
    ))}
    {[0, 1, 2, 3, 4, 5].map((v) => (
      <g key={v}>
        <path d={`M${px(v)} ${Y0}v10`} stroke="#000" strokeWidth="3.5" />
        <text x={px(v)} y={Y0 + 40} fontSize="27" textAnchor="middle">{v}</text>
      </g>
    ))}
    <polyline points={points.map(([x, y]) => `${px(x)},${py(y)}`).join(" ")} fill="none" stroke="#000" strokeWidth="3.5" />
    {points.map(([x, y]) => <circle key={x} cx={px(x)} cy={py(y)} r="7.5" />)}
    <text x="379" y="531" fontSize="30" textAnchor="middle">XTitle</text>
    <text transform="translate(33 267) rotate(-90)" fontSize="30" textAnchor="middle">YTitle</text>
  </svg>
);

type Node = { t: string; pad: number; bold?: boolean; selected?: boolean; icon?: string; edge?: string };

const tree: Node[][] = [
  [
    { t: "amily", pad: 0 },
    { t: "earch results", pad: 0 },
    { t: "ata with Results", pad: 3, edge: "#4a78ac" },
    { t: "Data 1", pad: 1, bold: true },
    { t: "...Transform of Data 1", pad: 0, bold: true, icon: "f" },
    { t: "......Transform X of Transform of Data 1", pad: 0, icon: "f" },
    { t: ".........Nonlin fit of Transform X of Transform", pad: 0, icon: "r" },
  ],
  [{ t: "ata Tables", pad: 3, edge: "#4a78ac" }, { t: "nfo", pad: 0 }, { t: "Project info 1", pad: 1 }],
  [
    { t: "esults", pad: 0 },
    { t: "raphs", pad: 1 },
    { t: "Data 1", pad: 1 },
    { t: "Transform of Data 1", pad: 1, bold: true, selected: true },
    { t: "Transform X of Transform of Data 1", pad: 1 },
  ],
  [{ t: "ayouts", pad: 0 }, { t: "loating Notes", pad: 3, edge: "#6c90c8" }],
];

const G = "#a8abb4";

export default function App() {
  return (
    <Shell>
      <Global />
      <Defs />
      <TitleBar>
        <PrismIcon w={35} h={29} />
        <TitleText>GraphPad Prism 7.00 - [Project1:Transform of Data 1]</TitleText>
        <WindowButtons>
          <WindowButton aria-label="Minimize"><svg width="18" height="18" viewBox="0 0 18 18"><path d="M0 8h18" stroke="#999" strokeWidth="2" /></svg></WindowButton>
          <WindowButton aria-label="Restore"><svg width="18" height="20" viewBox="0 0 18 20" fill="none" stroke="#999" strokeWidth="1.6"><path d="M1 5h13v13H1zM4 5V1h13v13h-3" /></svg></WindowButton>
        </WindowButtons>
      </TitleBar>
      <MenuBar>
        <PrismDocIcon />
        <MenuList>
          {["File", "Edit", "View", "Insert", "Change", "Arrange", "Family", "Window", "Help"].map((m) => <MenuButton key={m}>{m}</MenuButton>)}
        </MenuList>
        <ChildMinimize aria-label="Minimize sheet"><svg width="6" height="3"><path d="M0 1.5h6" stroke="#9ab0c0" strokeWidth="3" /></svg></ChildMinimize>
      </MenuBar>

      <Ribbon>
        <Group title="Prism" w={86}>
          <Row $pad={12} $tall><BigTool $w={56} aria-label="Prism"><PrismIcon w={58} h={54} /></BigTool><Caret /></Row>
        </Group>
        <Group title="File" w={100}>
          <Row><T label="New"><NewDocIcon /></T><Caret /><T label="Open"><OpenIcon /></T></Row>
          <Row><T label="Save"><SaveIcon /></T><T label="Save as"><SaveIcon /></T><Caret /></Row>
        </Group>
        <Group title="Sheet" w={161}>
          <Row><T label="Highlight"><HighlighterIcon /></T><Caret /><T label="Freeze"><SnowIcon /></T><T label="Pin"><PinIcon /></T><Caret /></Row>
          <Row><T label="Delete"><DeleteIcon /></T><T label="New sheet"><StarIcon /></T><WordTool>New</WordTool><Caret /></Row>
        </Group>
        <Group title="Undo" w={61}>
          <Row $pad={6}><T label="Redo"><RedoIcon /></T><Caret dim /></Row>
          <Row $pad={6}><T label="Undo"><UndoIcon /></T><Caret /></Row>
        </Group>
        <Group title="Clipboard" w={119}>
          <Row $pad={6}><T label="Cut"><CutIcon /></T><T label="Copy"><CopyIcon /></T><T label="Duplicate"><DuplicateIcon /></T></Row>
          <Row $pad={6}><T label="Paste"><PasteIcon /></T><T label="Paste special"><PasteIcon /></T><Caret /></Row>
        </Group>
        <Group title="Analysis" w={197}>
          <Row><T label="Linear regression"><LinearIcon /></T><T label="Nonlinear regression"><CurveIcon /></T><T label="Interpolate"><DoseIcon /></T></Row>
          <Row $gap={4}><T label="Analyze data" w={28}><EqualsIcon /></T><WordTool>Analyze</WordTool><T label="Results table" w={34}><TableIcon /></T><T label="Wizard" w={32}><WandIcon o={0.4} /></T></Row>
        </Group>
        <Group title="Change" w={213}>
          <Columns $pad={13} $cols="43px 46px 53px auto">
            <T label="Graph type"><ChartMixIcon /></T><T label="Axes"><AxisSwapIcon /></T><T label="Bars"><BarSwapIcon /></T><Cell><T label="Rotate"><RotateChartIcon /></T><Caret /></Cell>
            <T label="Magic"><WandIcon /></T><T label="Add graph"><AddGraphIcon /></T><Cell><T label="Resize"><ResizeIcon /></T><Caret /></Cell><Cell><T label="Colors"><BallsIcon /></T><Caret /></Cell>
          </Columns>
        </Group>
        <Group title="Arrange" w={90}>
          <Row $pad={20}><T label="Center"><CenterIcon /></T></Row>
          <Row $pad={20}><T label="Order"><OrderIcon /></T><Caret /></Row>
        </Group>
        <Group title="Draw" w={63}>
          <Row />
          <Row $pad={6}><T label="Rectangle"><RectIcon /></T><Caret /></Row>
        </Group>
        <Group title="Write" w={119}>
          <Row><T label="Equation"><RootIcon /></T><T label="Word object"><WordDocIcon /></T><T label="Info"><InfoIcon /></T></Row>
          <Row>
            <T label="Text"><Glyph $size={42} $bold $color="#22284a">T</Glyph></T>
            <T label="Text box"><Glyph $size={32} $bold $boxed $color="#22284a">T</Glyph></T>
            <T label="Greek"><Glyph $size={42} $color="#b4b6bc">α</Glyph></T>
          </Row>
        </Group>
        <Group title="Text" w={456}>
          <Row $gap={4}><Choice label="Font size" w={85} /><Choice label="Font" w={302} /><Cell><T label="Font color"><FontColorIcon /></T><Caret dim /></Cell></Row>
          <Row $pad={8} $gap={6}>
            <Cell><T label="Larger"><SizeIcon /></T><T label="Smaller"><SizeIcon up={false} /></T></Cell>
            <Cell>
              <T label="Bold"><Glyph $size={42} $bold $color={G}>B</Glyph></T>
              <T label="Italic"><Glyph $size={42} $italic $color={G}>I</Glyph></T>
              <T label="Underline"><Glyph $size={34} $underline $color={G}>U</Glyph></T>
            </Cell>
            <Cell><T label="Superscript"><ScriptIcon /></T><T label="Subscript"><ScriptIcon sup={false} /></T></Cell>
            <Cell><T label="Rotate left"><RotTextIcon /></T><T label="Rotate right"><RotTextIcon cw /></T><T label="Align"><AlignIcon /></T><Caret dim /></Cell>
          </Row>
        </Group>
        <Group title="Export" w={86}>
          <Row $pad={10} $tall><BigTool $w={66} aria-label="Export"><ExportIcon /></BigTool></Row>
        </Group>
        <Group title="Print" w={48}>
          <Row $pad={6}><T label="Print"><PrintIcon /></T></Row>
          <Row $pad={6}><T label="Print now"><PrintOkIcon /></T></Row>
        </Group>
        <Group title="Send" w={99}>
          <Row><T label="Mail"><MailIcon /></T><Caret /><T label="Web"><GlobeIcon /></T></Row>
          <Row $gap={14}><T label="PowerPoint"><PowerPointIcon /></T><T label="Word"><WordIcon /></T></Row>
        </Group>
        <Group title="LA" w={64}>
          <Row />
          <Row><T label="LabArchives"><FlaskIcon /></T><Caret /></Row>
        </Group>
        <Group title="Help" w={64}>
          <Row />
          <Row><T label="Help"><HelpIcon /></T><Caret /></Row>
        </Group>
        <Brand>
          <Drawing width="66" height="42" viewBox="0 0 66 42" fill="#9c9c9c" fontFamily="Lato, sans-serif">
            <text x="1" y="7" fontSize="8">GraphPad</text>
            <text x="0" y="34" fontSize="22" fontWeight="300">PRI<tspan fontSize="30" fontStyle="italic">S</tspan>M</text>
          </Drawing>
        </Brand>
      </Ribbon>

      <Body>
        <Sidebar>
          <Tree>
            {tree.map((branch, i) => (
              <Branch key={i}>
                {branch.map((n) => (
                  <Item key={n.t} $pad={n.pad} $bold={n.bold} $selected={n.selected} $edge={n.edge}>
                    {n.icon && <SheetGlyph red={n.icon === "r"} />}
                    {n.t}
                  </Item>
                ))}
              </Branch>
            ))}
          </Tree>
        </Sidebar>
        <Splitter><Grip /></Splitter>
        <Gutter $w={216} $line />
        <Page><Chart /></Page>
        <ScrollTrack>
          <ScrollUp aria-label="Scroll up"><svg width="12" height="9" viewBox="0 0 12 9" fill="none"><path d="M1 8l5-5 5 5" stroke="#606060" strokeWidth="2.6" /></svg></ScrollUp>
          <Thumb />
        </ScrollTrack>
        <Gutter $w={124} />
      </Body>

      <Watermark>
        <svg width="490" height="190" viewBox="0 0 490 190" fill="#fff">
          <g filter="url(#bevel)">
            <path d="M81 107C86 60 118 8 172 7c-1 22-4 58-20 71-16 13-40 15-59 28 1-20 34-44 49-67C120 50 98 84 81 107z" />
            <path d="M8 54c34-2 54 24 62 55-10-8-20-4-35-8C14 92 7 76 8 54z" />
            <path d="M73 115c3 30-16 56-42 63-3-30 16-56 42-63z" />
            <path d="M83 117c12 6 24 0 37 5 14 6 24 20 23 37-28 4-46-12-60-42z" />
            <text x="182" y="107" fontFamily='"Noto Sans CJK SC", sans-serif' fontSize="94" fontWeight="500" fontStyle="italic">丁香园</text>
            <text x="196" y="158" fontFamily="Lato, sans-serif" fontSize="38" fontWeight="900" fontStyle="italic">WWW.DXY.CN</text>
          </g>
        </svg>
      </Watermark>
    </Shell>
  );
}
